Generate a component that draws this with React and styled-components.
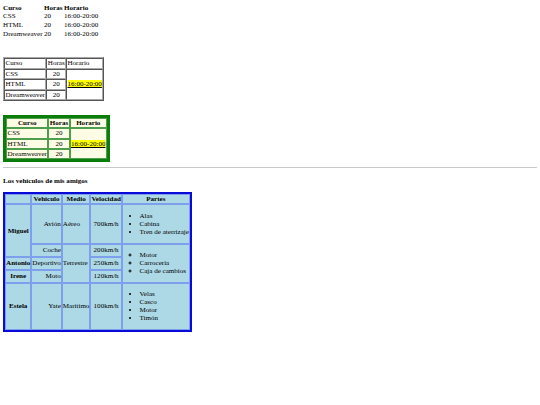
import styled, { createGlobalStyle } from "styled-components";

const Global = createGlobalStyle`
  html, body {
    margin: 0;
    background: #fff;
  }
  body {
    font-family: "Liberation Serif", "Times New Roman", serif;
    font-size: 16px;
    color: #000;
  }
`;

// toda la página se dibuja a escala reducida
const Page = styled.div`
  zoom: 0.44;
  padding: 8px 7px;
  display: flex;
  flex-direction: column;
  align-items: flex-start;
`;

// tabla simple sin bordes
const PlainTable = styled.table`
  border-collapse: separate;
  border-spacing: 0;

  th {
    text-align: left;
    font-weight: 700;
    padding: 0.7px 3.5px 0.7px 0;
  }
  td {
    padding: 0.7px 3.5px 0.7px 0;
  }
`;

const BorderTable = styled.table`
  margin-top: 44px;
  border: 1px outset #a8a8a8;
  border-spacing: 1px;

  td {
    border: 1px inset #a8a8a8;
    padding: 0.5px 1px;
  }
`;

const GreenTable = styled.table`
  margin-top: 31px;
  border: 7px solid #0b7d0b;
  background: #9ed69a;
  border-spacing: 1px;

  th,
  td {
    border: 1px solid #4e9e4e;
    background: #fcfde4;
    padding: 0.5px 1px;
  }
  th {
    font-weight: 700;
    text-align: center;
  }
`;

const Cell = styled.td`
  text-align: ${(p) => p.$align || "left"};
  vertical-align: middle;
`;

const Highlight = styled.span`
  background: #ffff00;
  text-decoration: underline;
`;

const Rule = styled.hr`
  align-self: stretch;
  margin: 10px 0 0;
  border: none;
  border-top: 2px solid #c8c8c8;
`;

const Heading = styled.h4`
  margin: 20px 0 16px;
  font-size: 16px;
  font-weight: 700;
`;

const CarTable = styled.table`
  border: 5px solid #0a0ad8;
  background: #5f86e6;
  border-spacing: 1px;

  th,
  td {
    border: 1px solid #7ea0ec;
    background: #add8e6;
    padding: 1px 0;
  }
  th {
    font-weight: 700;
    text-align: center;
  }
`;

const PartsList = styled.ul`
  margin: 14px 0;
  padding-left: 38px;
  list-style-type: ${(p) => p.$type || "disc"};
  text-align: left;
`;

const cursos = ["CSS", "HTML", "Dreamweaver"];

const App = () => {
  return (
    <Page>
      <Global />
      <PlainTable>
        <tbody>
          <tr>
            <th>Curso</th>
            <th>Horas</th>
            <th>Horario</th>
          </tr>
          {cursos.map((c) => (
            <tr key={c}>
              <td>{c}</td>
              <td>20</td>
              <td>16:00-20:00</td>
            </tr>
          ))}
        </tbody>
      </PlainTable>

      <BorderTable>
        <tbody>
          <tr>
            <td>Curso</td>
            <td>Horas</td>
            <td>Horario</td>
          </tr>
          {cursos.map((c, i) => (
            <tr key={c}>
              <td>{c}</td>
              <Cell $align="center">20</Cell>
              {i === 0 && (
                <Cell rowSpan={3}>
                  <Highlight>16:00-20:00</Highlight>
                </Cell>
              )}
            </tr>
          ))}
        </tbody>
      </BorderTable>

      <GreenTable>
        <tbody>
          <tr>
            <th>Curso</th>
            <th>Horas</th>
            <th>Horario</th>
          </tr>
          {cursos.map((c, i) => (
            <tr key={c}>
              <td>{c}</td>
              <Cell $align="center">20</Cell>
              {i === 0 && (
                <Cell rowSpan={3}>
                  <Highlight>16:00-20:00</Highlight>
                </Cell>
              )}
            </tr>
          ))}
        </tbody>
      </GreenTable>

      <Rule />
      <Heading>Los vehículos de mis amigos</Heading>

      <CarTable>
        <tbody>
          <tr>
            <th></th>
            <th>Vehículo</th>
            <th>Medio</th>
            <th>Velocidad</th>
            <th>Partes</th>
          </tr>
          <tr>
            <th rowSpan={2}>Miguel</th>
            <Cell $align="right">Avión</Cell>
            <Cell>Aéreo</Cell>
            <Cell $align="center">700km/h</Cell>
            <td>
              <PartsList>
                <li>Alas</li>
                <li>Cabina</li>
                <li>Tren de aterrizaje</li>
              </PartsList>
            </td>
          </tr>
          <tr>
            <Cell $align="right">Coche</Cell>
            <Cell rowSpan={3}>Terrestre</Cell>
            <Cell $align="center">200km/h</Cell>
            <td rowSpan={3}>
              <PartsList $type="circle">
                <li>Motor</li>
                <li>Carrocería</li>
                <li>Caja de cambios</li>
              </PartsList>
            </td>
          </tr>
          <tr>
            <th>Antonio</th>
            <Cell $align="right">Deportivo</Cell>
            <Cell $align="center">250km/h</Cell>
          </tr>
          <tr>
            <th>Irene</th>
            <Cell $align="right">Moto</Cell>
            <Cell $align="center">120km/h</Cell>
          </tr>
          <tr>
            <th>Estela</th>
            <Cell $align="right">Yate</Cell>
            <Cell>Marítimo</Cell>
            <Cell $align="center">100km/h</Cell>
            <td>
              <PartsList>
                <li>Velas</li>
                <li>Casco</li>
                <li>Motor</li>
                <li>Timón</li>
              </PartsList>
            </td>
          </tr>
        </tbody>
      </CarTable>
    </Page>
  );
};

export default App;
